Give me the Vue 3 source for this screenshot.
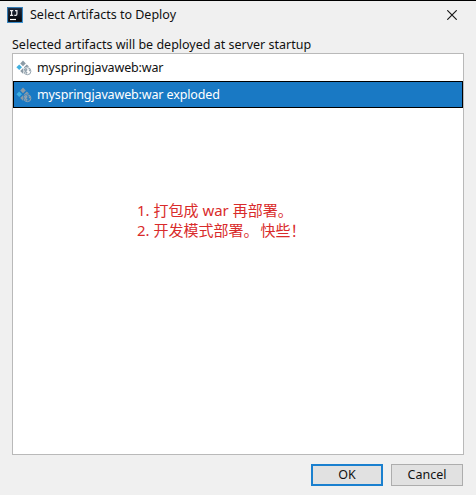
<script setup>
import { ref } from 'vue'

const artifacts = ['myspringjavaweb:war', 'myspringjavaweb:war exploded']
const selected = ref(1)
</script>

<template>
  <div class="dialog">
    <header class="titlebar">
      <svg class="logo" width="16" height="16" viewBox="0 0 16 16">
        <defs>
          <linearGradient id="frame" x1="0" y1="0" x2="1" y2="1">
            <stop offset="0" stop-color="#3474a8" />
            <stop offset="1" stop-color="#3f97d8" />
          </linearGradient>
          <linearGradient id="face" x1="0" y1="0" x2="0" y2="1">
            <stop offset="0" stop-color="#1c2638" />
            <stop offset="1" stop-color="#05060a" />
          </linearGradient>
        </defs>
        <rect width="16" height="16" fill="url(#frame)" />
        <rect x="1.1" y="1.1" width="13.8" height="13.8" fill="url(#face)" />
        <path d="M3 3.6H6.2M4.6 3.6V8.4M3 8.4H6.2M8 3.6H10.5M9.9 3.6V7.1Q9.9 8.4 8.8 8.4H7.3" fill="none" stroke="#ececf0" stroke-width="1.2" />
        <path d="M3 12.5H9" stroke="#fff" stroke-width="1.2" />
      </svg>
      <h1 class="title">Select Artifacts to Deploy</h1>
      <svg class="close" width="10" height="10" viewBox="0 0 10 10">
        <path d="M.3 .3L9.7 9.7M9.7 .3L.3 9.7" stroke="#161616" stroke-width="1.15" />
      </svg>
    </header>
    <p class="label">Selected artifacts will be deployed at server startup</p>
    <div class="list">
      <div
        v-for="(name, i) in artifacts"
        :key="name"
        class="row"
        :class="{ selected: i === selected }"
        @click="selected = i"
      >
        <svg class="icon" width="16" height="16" viewBox="0 0 16 16">
          <path d="M7 .6L9.8 3.4L7 6.2L4.2 3.4Z" fill="#8b9aa5" />
          <path d="M3.2 4.4L6 7.2L3.2 10L.4 7.2Z" fill="#3fb0e0" />
          <path d="M10.8 4.4L13.2 6.8Q9.8 6.2 8.3 8.2L8 7.2Z" fill="#8b9aa5" />
          <path d="M7 8.2L7.6 8.8Q6.4 11 7.4 13.4L7 13.8L4.2 11Z" fill="#8b9aa5" />
          <circle cx="11.4" cy="11.2" r="3.5" class="globe" stroke="#94a3ae" stroke-width="1" />
          <path d="M8.5 9.8L10.8 8.6L11.6 10L10.2 11.2L11.6 12.6L10.8 14L9.3 12.4ZM12.8 8.6L14.4 10.4L13.6 11.6L12.8 10.6Z" fill="#94a3ae" />
        </svg>
        <span class="name">{{ name }}</span>
      </div>
      <ol class="notes">
        <li>1. 打包成 war 再部署。</li>
        <li>2. 开发模式部署。<span class="aside">快些！</span></li>
      </ol>
    </div>
    <footer class="actions">
      <button class="btn primary"><span>OK</span></button>
      <button class="btn"><span>Cancel</span></button>
    </footer>
  </div>
</template>

<style>
body {
  margin: 0;
  background: #f0f0f0;
}
</style>

<style scoped>
.dialog {
  box-sizing: border-box;
  width: 476px;
  height: 495px;
  padding: 0 12px;
  display: flex;
  flex-direction: column;
  border-top: 1px solid #000;
  background: #f0f0f0;
  color: #111;
  font: 12.5px/18px "Noto Sans", "Open Sans", sans-serif;
  white-space: nowrap;
  overflow: hidden;
}
.titlebar {
  display: flex;
  align-items: center;
  height: 28px;
  margin-left: -5px;
  padding-right: 7px;
}
.title {
  margin: 0 auto 0 7px;
  font-size: 12.5px;
  font-weight: 400;
}
.label {
  margin: 7px 0 0;
  height: 17px;
}
.list {
  box-sizing: border-box;
  width: 452px;
  height: 402px;
  border: 1px solid #b9b9b9;
  background: #fff;
}
.row {
  box-sizing: border-box;
  height: 27px;
  padding: 0 3px 0 2px;
  display: flex;
  align-items: center;
  gap: 5px;
  border: 1px solid transparent;
}
.name {
  letter-spacing: -0.14px;
  padding-top: 1px;
}
.icon {
  margin-top: 1px;
}
.row.selected {
  border-color: #000;
  background: #1979c4;
  color: #fff;
}
.globe {
  fill: #fff;
}
.selected .globe {
  fill: #2f7fbd;
}
.notes {
  margin: 92px 0 0 124px;
  padding: 0;
  list-style: none;
  color: #d92b2b;
  font: 15px/20px "Noto Sans", "Noto Sans CJK SC", sans-serif;
}
.aside {
  margin-left: 2px;
}
.actions {
  display: flex;
  justify-content: flex-end;
  gap: 8px;
  padding: 9px 1px 0 0;
}
.btn {
  box-sizing: border-box;
  width: 72px;
  height: 22px;
  padding: 0;
  display: flex;
  align-items: center;
  justify-content: center;
  border: 1px solid #adadad;
  background: #e1e1e1;
  color: #111;
  font: inherit;
}
.btn.primary {
  border: 2px solid #1a80cf;
}
</style>
